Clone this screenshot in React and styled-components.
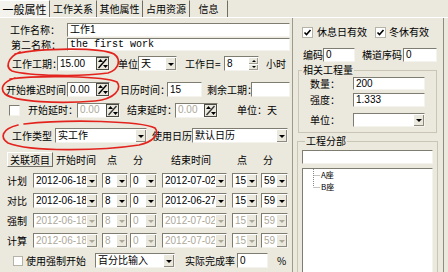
import React from 'react';
import styled, { createGlobalStyle } from 'styled-components';

const BG = '#ebe9de';
const DIS = '#aca899';

const Global = createGlobalStyle`
  html, body { margin: 0; padding: 0; background: ${BG}; }
  body { font-family: "Noto Sans CJK SC", "Noto Sans", sans-serif; font-size: 10px; }
  #root { width: 448px; height: 272px; }
`;

const Page = styled.div`
  position: relative;
  width: 448px;
  height: 272px;
  overflow: hidden;
  background: ${BG};
  color: #000;
  font-family: "Noto Sans CJK SC", sans-serif;
  font-size: 10px;
  line-height: 1;
`;

const TabBar = styled.div`
  display: flex;
  height: 18px;
  box-sizing: border-box;
  border-bottom: 1px solid #fff;
`;

const Tab = styled.div`
  box-sizing: border-box;
  width: ${p => p.$w}px;
  height: 17px;
  display: flex;
  align-items: center;
  justify-content: center;
  border-right: 1px solid #6f6d64;
  border-top: 1px solid ${p => (p.$active ? '#fff' : 'transparent')};
  background: ${p => (p.$active ? '#f3f2ec' : BG)};
  font-size: ${p => (p.$active ? 11 : 10)}px;
  white-space: nowrap;
`;

const Body = styled.div`
  display: flex;
  height: 254px;
`;

const LeftPanel = styled.div`
  box-sizing: border-box;
  width: 293px;
  flex: none;
  border-right: 1px solid #9d9a8c;
  display: flex;
  flex-direction: column;
`;

const RightPanel = styled.div`
  box-sizing: border-box;
  width: 151px;
  flex: none;
  border-right: 1px solid #8f8d82;
  display: flex;
  flex-direction: column;
`;

const Row = styled.div`
  display: flex;
  align-items: center;
  flex: none;
  height: ${p => p.$h || 15}px;
  margin-top: ${p => p.$mt || 0}px;
`;

const Label = styled.span`
  flex: none;
  margin-left: ${p => p.$ml || 0}px;
  width: ${p => (p.$w ? `${p.$w}px` : 'auto')};
  text-align: ${p => p.$align || 'left'};
  white-space: nowrap;
  color: ${p => (p.$dis ? DIS : '#000')};
  font-size: 10px;
`;

const Box = styled.div`
  box-sizing: border-box;
  flex: ${p => (p.$w ? 'none' : '1 1 auto')};
  width: ${p => (p.$w ? `${p.$w}px` : 'auto')};
  height: ${p => p.$h || 15}px;
  margin-left: ${p => p.$ml || 0}px;
  margin-right: ${p => p.$mr || 0}px;
  display: flex;
  align-items: stretch;
  background: #fff;
  border: 1px solid;
  border-color: #7f7d72 #f4f3ee #f4f3ee #7f7d72;
  overflow: hidden;
`;

const BoxText = styled.span`
  flex: 1 1 auto;
  min-width: 0;
  display: flex;
  align-items: center;
  padding-left: 2px;
  font-family: ${p => (p.$mono ? '"Liberation Mono", monospace' : '"Liberation Sans", "Noto Sans CJK SC", sans-serif')};
  font-size: 10px;
  color: ${p => (p.$dis ? DIS : '#000')};
  white-space: nowrap;
`;

const DropBtn = styled.span`
  flex: none;
  width: 10px;
  background: ${BG};
  border-left: 1px solid #fff;
  border-top: 1px solid #fff;
  box-shadow: inset -1px -1px 0 #8d8b80;
  display: flex;
  align-items: center;
  justify-content: center;
  &::after {
    content: '';
    border-left: 3px solid transparent;
    border-right: 3px solid transparent;
    border-top: 3px solid ${p => (p.$dis ? DIS : '#000')};
  }
`;

const SpinCol = styled.span`
  flex: none;
  width: 10px;
  display: flex;
  flex-direction: column;
`;

const SpinPart = styled.span`
  flex: 1;
  background: ${BG};
  border-top: 1px solid #fff;
  border-left: 1px solid #fff;
  box-shadow: inset -1px -1px 0 #a09e92;
  display: flex;
  align-items: center;
  justify-content: center;
  &::after {
    content: '';
    border-left: 2px solid transparent;
    border-right: 2px solid transparent;
    ${p => (p.$up ? 'border-bottom: 2px solid #000;' : 'border-top: 2px solid #000;')}
  }
`;

const CheckBox = styled.span`
  box-sizing: border-box;
  flex: none;
  width: ${p => p.$s || 11}px;
  height: ${p => p.$s || 11}px;
  margin-left: ${p => p.$ml || 0}px;
  background: #fff;
  border: 1px solid;
  border-color: ${p => (p.$soft ? '#b5b3a8' : '#7f7d72 #f4f3ee #f4f3ee #7f7d72')};
  display: flex;
  align-items: center;
  justify-content: center;
`;

const Button = styled.div`
  box-sizing: border-box;
  flex: none;
  width: ${p => p.$w}px;
  height: 15px;
  margin-left: ${p => p.$ml || 0}px;
  display: flex;
  align-items: center;
  justify-content: center;
  background: ${BG};
  border: 1px solid;
  border-color: #fff #6f6d64 #6f6d64 #fff;
  font-size: 10px;
`;

const GroupBox = styled.fieldset`
  box-sizing: border-box;
  width: ${p => p.$w}px;
  margin: ${p => p.$mt || 0}px 0 0 ${p => p.$ml || 0}px;
  padding: ${p => p.$pt || 0}px 0 ${p => p.$pb || 0}px ${p => p.$pl || 0}px;
  border: 1px solid #c9c6b6;
  flex: none;
  min-width: 0;
`;

const Legend = styled.legend`
  padding: 0 1px;
  margin-left: 3px;
  font-size: 10px;
  line-height: 12px;
  height: 12px;
`;

const Tree = styled.div`
  box-sizing: border-box;
  width: ${p => p.$w}px;
  height: 120px;
  margin-top: ${p => p.$mt || 0}px;
  background: #fff;
  border: 1px solid;
  border-color: #7f7d72 #f4f3ee #f4f3ee #7f7d72;
  padding: 0 0 0 9px;
`;

const TreeItem = styled.div`
  display: flex;
  align-items: center;
  height: 12px;
  font-size: 8px;
  line-height: 12px;
`;

const Overlay = styled.svg`
  position: absolute;
  left: 0;
  top: 0;
  pointer-events: none;
`;

const SpinIcon = ({ dis }) => (
  <svg width="13" height="13" viewBox="0 0 13 13" style={{ flex: 'none', alignSelf: 'center' }}>
    <rect x="0.5" y="0.5" width="12" height="12" fill={BG} stroke="#4a4a44" />
    <line x1="2.5" y1="11" x2="10.5" y2="2" stroke={dis ? '#333' : '#000'} strokeWidth="1.4" />
    <polygon points="2,5 4.5,2 7,5" fill="#000" />
    <polygon points="7,8 9.5,11 12,8" fill="#000" />
  </svg>
);

const Check = () => (
  <svg width="9" height="9" viewBox="0 0 9 9">
    <polyline points="1.5,4.5 3.5,6.5 7.5,2" fill="none" stroke="#000" strokeWidth="1.6" />
  </svg>
);

const Connector = ({ last }) => (
  <svg width="9" height="12" viewBox="0 0 9 12" style={{ flex: 'none' }}>
    <line x1="1.5" y1="0" x2="1.5" y2={last ? 6 : 12} stroke="#888" strokeDasharray="1 1" />
    <line x1="1.5" y1="6.5" x2="8" y2="6.5" stroke="#888" strokeDasharray="1 1" />
  </svg>
);

const Select = ({ w, ml, mr, h, text, dis }) => (
  <Box $w={w} $ml={ml} $mr={mr} $h={h}>
    <BoxText $dis={dis}>{text}</BoxText>
    <DropBtn $dis={dis} />
  </Box>
);

const SpinField = ({ w, ml, text, dis }) => (
  <Box $w={w} $ml={ml}>
    <BoxText $dis={dis}>{text}</BoxText>
    <SpinIcon dis={dis} />
  </Box>
);

const DateRow = ({ mt, label, dis, d1, h1, m1, d2, h2, m2 }) => (
  <Row $mt={mt}>
    <Label $ml={7} $w={26}>{label}</Label>
    <Select w={65} text={d1} dis={dis} />
    <Select w={26} ml={4} text={h1} dis={dis} />
    <Select w={27} ml={2} text={m1} dis={dis} />
    <Select w={65} ml={5} text={d2} dis={dis} />
    <Select w={26} ml={5} text={h2} dis={dis} />
    <Select w={27} ml={3} text={m2} dis={dis} />
  </Row>
);

export default function App() {
  return (
    <Page>
      <Global />
      <TabBar>
        <Tab $w={50} $active>一般属性</Tab>
        <Tab $w={47}>工作关系</Tab>
        <Tab $w={46}>其他属性</Tab>
        <Tab $w={47}>占用资源</Tab>
        <Tab $w={38}>信息</Tab>
      </TabBar>
      <Body>
        <LeftPanel>
          <Row $mt={5} $h={14}>
            <Label $ml={10} $w={57}>工作名称：</Label>
            <Box $h={14} $mr={2}><BoxText>工作1</BoxText></Box>
          </Row>
          <Row $mt={1} $h={13}>
            <Label $ml={11} $w={56}>第二名称：</Label>
            <Box $h={13} $mr={2}><BoxText $mono>the first work</BoxText></Box>
          </Row>
          <Row $mt={5}>
            <Label $ml={12} $w={45}>工作工期：</Label>
            <SpinField w={53} text="15.00" />
            <Label $ml={8} $w={20}>单位</Label>
            <Select w={39} text="天" />
            <Label $ml={8} $w={38}>工作日=</Label>
            <Box $w={35} $ml={1}>
              <BoxText>8</BoxText>
              <SpinCol><SpinPart $up /><SpinPart /></SpinCol>
            </Box>
            <Label $ml={7}>小时</Label>
          </Row>
          <Row $mt={11}>
            <Label $ml={6} $w={61}>开始推迟时间</Label>
            <SpinField w={43} text="0.00" />
            <Label $ml={10} $w={47}>日历时间：</Label>
            <Box $w={35}><BoxText>15</BoxText></Box>
            <Label $ml={5} $w={44}>剩余工期：</Label>
            <Box $w={39}><BoxText /></Box>
          </Row>
          <Row $mt={6} $h={14}>
            <CheckBox $ml={9} />
            <Label $ml={8} $w={49}>开始延时：</Label>
            <SpinField w={43} text="0.00" dis />
            <Label $ml={7} $w={48}>结束延时：</Label>
            <SpinField w={43} text="0.00" dis />
            <Label $ml={19}>单位：天</Label>
          </Row>
          <Row $mt={11}>
            <Label $ml={12} $w={43}>工作类型</Label>
            <Select w={92} text="实工作" />
            <Label $ml={5} $w={40}>使用日历</Label>
            <Select w={96} text="默认日历" />
          </Row>
          <Row $mt={9}>
            <Button $ml={7} $w={46}>关联项目</Button>
            <Label $w={46} $align="center">开始时间</Label>
            <Label $w={26} $align="center">点</Label>
            <Label $w={26} $align="center">分</Label>
            <Label $w={80} $align="center">结束时间</Label>
            <Label $w={22} $align="center">点</Label>
            <Label $w={30} $align="center">分</Label>
          </Row>
          <DateRow mt={6} label="计划" d1="2012-06-18" h1="8" m1="0" d2="2012-07-02" h2="15" m2="59" />
          <DateRow mt={5} label="对比" d1="2012-06-18" h1="8" m1="0" d2="2012-06-27" h2="15" m2="59" />
          <DateRow mt={5} label="强制" dis d1="2012-06-18" h1="8" m1="0" d2="2012-07-02" h2="15" m2="59" />
          <DateRow mt={5} label="计算" dis d1="2012-06-18" h1="8" m1="0" d2="2012-07-02" h2="15" m2="59" />
          <Row $mt={5}>
            <CheckBox $ml={13} $s={10} $soft />
            <Label $ml={3} $w={62}>使用强制开始</Label>
            <Select w={80} ml={7} text="百分比输入" />
            <Label $ml={10} $w={52}>实际完成率</Label>
            <Box $w={31}><BoxText>0</BoxText></Box>
            <Label $ml={9}>%</Label>
          </Row>
        </LeftPanel>
        <RightPanel>
          <Row $mt={8} $h={12}>
            <CheckBox $ml={9} $soft><Check /></CheckBox>
            <Label $ml={4} $w={50}>休息日有效</Label>
            <CheckBox $ml={8} $soft><Check /></CheckBox>
            <Label $ml={3}>冬休有效</Label>
          </Row>
          <Row $mt={10} $h={14}>
            <Label $ml={10} $w={20}>编码</Label>
            <Box $w={32} $h={14}><BoxText>0</BoxText></Box>
            <Label $ml={7} $w={41}>横道序码</Label>
            <Box $w={34} $h={14}><BoxText>0</BoxText></Box>
          </Row>
          <GroupBox $w={139} $ml={5} $mt={2} $pt={1} $pb={5}>
            <Legend>相关工程量</Legend>
            <Row $h={13}>
              <Label $ml={11} $w={43}>数量：</Label>
              <Box $w={72} $h={13}><BoxText>200</BoxText></Box>
            </Row>
            <Row $mt={3} $h={14}>
              <Label $ml={11} $w={43}>强度：</Label>
              <Box $w={72} $h={14}><BoxText>1.333</BoxText></Box>
            </Row>
            <Row $mt={6} $h={14}>
              <Label $ml={11} $w={43}>单位：</Label>
              <Select w={72} h={14} text="" />
            </Row>
          </GroupBox>
          <GroupBox $w={141} $ml={4} $mt={2} $pt={3} $pl={4}>
            <Legend>工程分部</Legend>
            <Box $w={131} $h={14}><BoxText /></Box>
            <Tree $w={131} $mt={4}>
              <TreeItem><Connector /><span>A座</span></TreeItem>
              <TreeItem><Connector last /><span>B座</span></TreeItem>
            </Tree>
          </GroupBox>
        </RightPanel>
      </Body>
      <Overlay width="448" height="272" viewBox="0 0 448 272">
        <g fill="none" stroke="#e3241e" strokeWidth="1.7" strokeLinecap="round">
          <path d="M15 54 C40 48, 100 47, 114 54 C121 59, 120 69, 108 73 C80 77, 30 76, 12 71 C6 68, 6 58, 20 52" />
          <path d="M10 79 C40 75, 104 76, 117 82 C122 89, 115 99, 95 101 C60 104, 15 102, 5 94 C0 89, 2 82, 15 78" />
          <path d="M24 124 C70 119, 140 121, 155 128 C160 134, 153 142, 139 145 C100 151, 30 152, 8 143 C0 138, 1 129, 18 125" />
        </g>
      </Overlay>
    </Page>
  );
}
